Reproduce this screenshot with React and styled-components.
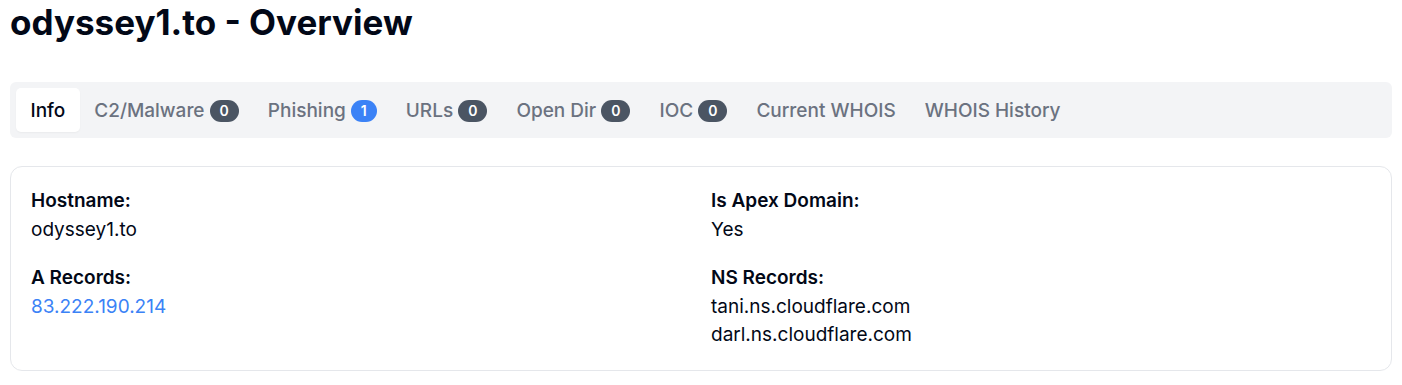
import styled, { createGlobalStyle } from "styled-components";

const GlobalStyle = createGlobalStyle`
    body {
        margin: 0;
        background: #ffffff;
        font-family: Inter, "Noto Sans", sans-serif;
        color: #020817;
    }
`;

const Page = styled.div`
    padding: 0 10px;
`;

const Title = styled.h1`
    font-size: 35px;
    font-weight: 700;
    line-height: 44px;
    margin: 0 0 38px;
`;

const TabList = styled.div`
    display: flex;
    align-items: center;
    height: 56px;
    padding: 0 6px;
    background-color: #f3f4f6;
    border-radius: 6px;
    box-sizing: border-box;
`;

const Tab = styled.div`
    display: flex;
    align-items: center;
    gap: 5px;
    height: 44px;
    padding: 1px 14.5px 0;
    box-sizing: border-box;
    border-radius: 5px;
    font-size: 19px;
    line-height: 28px;
    font-weight: 500;
    color: ${(p) => (p.active ? "#020817" : "#6b7280")};
    background-color: ${(p) => (p.active ? "#ffffff" : "transparent")};
    box-shadow: ${(p) => (p.active ? "0 1px 2px rgba(0,0,0,0.04)" : "none")};
    cursor: pointer;
`;

const Badge = styled.span`
    display: inline-flex;
    align-items: center;
    justify-content: center;
    height: 22px;
    padding: 0 10px;
    box-sizing: border-box;
    border-radius: 11px;
    font-size: 14px;
    font-weight: 600;
    color: #ffffff;
    background-color: ${(p) => (p.blue ? "#3b82f6" : "#4b5563")};
`;

const Card = styled.div`
    margin-top: 28px;
    border: 1px solid #e5e7eb;
    border-radius: 12px;
    padding: 20px;
    display: grid;
    grid-template-columns: 1fr 1fr;
    column-gap: 20px;
`;

const Column = styled.div`
    display: flex;
    flex-direction: column;
    gap: 20px;
`;

const Field = styled.div`
    display: flex;
    flex-direction: column;
    font-size: 19px;
    line-height: 28.5px;
`;

const Label = styled.div`
    font-weight: 600;
`;

const Value = styled.div`
    color: #020817;
`;

const Link = styled.a`
    color: #3b82f6;
    text-decoration: none;
`;

const tabs = [
    { name: "Info", active: true },
    { name: "C2/Malware", count: 0 },
    { name: "Phishing", count: 1, blue: true },
    { name: "URLs", count: 0 },
    { name: "Open Dir", count: 0 },
    { name: "IOC", count: 0 },
    { name: "Current WHOIS" },
    { name: "WHOIS History" },
];

const App = () => {
    return (
        <Page>
            <GlobalStyle />
            <Title>odyssey1.to - Overview</Title>
            <TabList>
                {tabs.map((t) => (
                    <Tab key={t.name} active={t.active}>
                        {t.name}
                        {t.count !== undefined && <Badge blue={t.blue}>{t.count}</Badge>}
                    </Tab>
                ))}
            </TabList>
            <Card>
                <Column>
                    <Field>
                        <Label>Hostname:</Label>
                        <Value>odyssey1.to</Value>
                    </Field>
                    <Field>
                        <Label>A Records:</Label>
                        <Link href="#">83.222.190.214</Link>
                    </Field>
                </Column>
                <Column>
                    <Field>
                        <Label>Is Apex Domain:</Label>
                        <Value>Yes</Value>
                    </Field>
                    <Field>
                        <Label>NS Records:</Label>
                        <Value>tani.ns.cloudflare.com</Value>
                        <Value>darl.ns.cloudflare.com</Value>
                    </Field>
                </Column>
            </Card>
        </Page>
    );
};

export default App;
